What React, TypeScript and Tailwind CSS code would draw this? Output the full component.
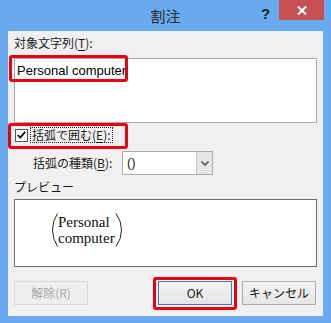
import React from 'react';

const jp = { fontFamily: '"Noto Sans CJK JP", "Liberation Sans", sans-serif' };

function Mn({ k }: { k: string }) {
  return <span className="underline underline-offset-2">{k}</span>;
}

export default function App() {
  return (
    <div className="relative w-[331px] h-[323px] bg-[#6aabf0] flex flex-col" style={jp}>
      {/* title bar */}
      <div className="relative h-[31px] flex items-center justify-center">
        <span className="text-[15px] text-[#2b2b2b] mt-[1px]">割注</span>
        <span
          className="absolute left-[261px] top-[3px] text-[15px] font-bold text-[#222]"
          style={{ fontFamily: '"Liberation Sans", sans-serif' }}
        >
          ?
        </span>
        <div className="absolute left-[279px] top-0 w-[45px] h-[20px] bg-[#c75050] flex items-center justify-center">
          <svg width="10" height="9" viewBox="0 0 10 9">
            <path d="M1 0.5 L9 8.5 M9 0.5 L1 8.5" stroke="#fff" strokeWidth="2" />
          </svg>
        </div>
      </div>

      {/* client area */}
      <div className="mx-[8px] w-[315px] h-[285px] bg-[#f0f0f0] px-[6px] flex flex-col text-[12px] text-[#1a1a1a]">
        <div className="pt-[4px] leading-[16px] h-[20px]">
          対象文字列(<Mn k="T" />):
        </div>
        <div className="mt-[7px] h-[65px] w-[303px] bg-white border border-[#a9a9a9] pl-[2px] pt-[2px]">
          <span className="text-[13px] leading-[18px] text-black" style={{ fontFamily: '"Liberation Sans", sans-serif' }}>
            Personal computer
          </span>
        </div>

        <div className="mt-[4px] h-[16px] flex items-center">
          <div className="ml-[1px] w-[13px] h-[13px] border border-[#555] bg-white flex items-center justify-center">
            <svg width="9" height="8" viewBox="0 0 9 8">
              <path d="M0.8 4 L3.3 6.6 L8.2 0.8" stroke="#111" strokeWidth="1.8" fill="none" />
            </svg>
          </div>
          <span className="ml-[2px] px-[1px] leading-[14px] border border-dotted border-[#222]">
            括弧で囲む(<Mn k="E" />):
          </span>
        </div>

        <div className="mt-[8px] h-[24px] flex items-center">
          <span className="ml-[19px] w-[89px]">括弧の種類(<Mn k="B" />):</span>
          <div className="w-[91px] h-[24px] bg-white border border-[#acacac] flex">
            <span className="flex-1 pl-[4px] leading-[22px] text-[13px]" style={{ fontFamily: '"Liberation Sans", sans-serif' }}>
              ()
            </span>
            <div className="w-[16px] h-full bg-[#e6e6e6] border-l border-[#c4c4c4] flex items-center justify-center">
              <svg width="8" height="5" viewBox="0 0 8 5">
                <path d="M0.5 0.5 L4 4 L7.5 0.5" stroke="#555" strokeWidth="1.6" fill="none" />
              </svg>
            </div>
          </div>
        </div>

        <div className="mt-[4px] h-[16px] leading-[16px]">プレビュー</div>
        <div className="mt-[4px] h-[68px] w-[303px] bg-white border border-[#6e6e6e] flex items-start">
          <div className="ml-[37px] mt-[13px] flex items-center">
            <svg width="6" height="34" viewBox="0 0 6 34">
              <path d="M5.5 0.5 Q0.5 8 0.5 17 Q0.5 26 5.5 33.5" stroke="#222" strokeWidth="1" fill="none" />
            </svg>
            <div
              className="text-[15px] leading-[16px] text-[#111]"
              style={{ fontFamily: '"Liberation Serif", serif' }}
            >
              <div>Personal</div>
              <div>computer</div>
            </div>
            <svg width="7" height="34" viewBox="0 0 7 34">
              <path d="M1 0.5 Q6.5 8 6.5 17 Q6.5 26 1 33.5" stroke="#222" strokeWidth="1" fill="none" />
            </svg>
          </div>
        </div>

        <div className="mt-[14px] h-[24px] flex">
          <div className="w-[74px] h-[24px] border border-[#d9d9d9] bg-[#efefef] text-[#a6a6a6] flex items-center justify-center">
            解除(R)
          </div>
          <div className="ml-[70px] w-[74px] h-[24px] border border-[#3c7fb1] bg-gradient-to-b from-[#f2f2f2] to-[#e6e6e6] flex items-center justify-center text-[12px]">
            OK
          </div>
          <div className="ml-[10px] w-[74px] h-[24px] border border-[#acacac] bg-gradient-to-b from-[#f2f2f2] to-[#e6e6e6] flex items-center justify-center">
            キャンセル
          </div>
        </div>
      </div>

      {/* red highlight annotations */}
      <div className="absolute left-[9px] top-[55px] w-[119px] h-[27px] border-[3px] border-[#ea0010] rounded-[3px]" />
      <div className="absolute left-[8px] top-[123px] w-[120px] h-[26px] border-[3px] border-[#ea0010] rounded-[3px]" />
      <div className="absolute left-[153px] top-[277px] w-[84px] h-[33px] border-[3px] border-[#ea0010] rounded-[3px]" />
    </div>
  );
}
